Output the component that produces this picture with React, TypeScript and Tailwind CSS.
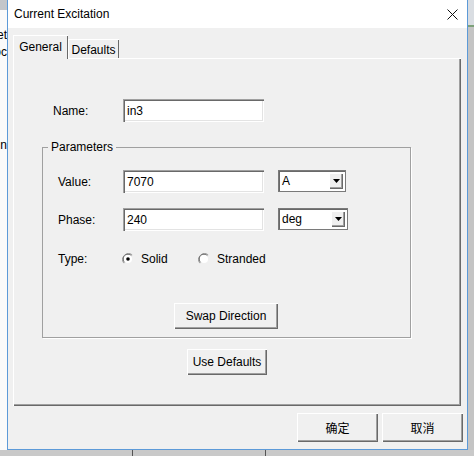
// Classic Win32 "Current Excitation" property dialog.

const btn =
  "flex items-center justify-center bg-[#f0f0f0] shadow-[inset_1px_1px_0_#ffffff,inset_-1px_-1px_0_#696969,inset_-2px_-2px_0_#a0a0a0]";
const sunken =
  "bg-white shadow-[inset_1px_1px_0_#a0a0a0,inset_2px_2px_0_#696969,inset_-1px_-1px_0_#ffffff,inset_-2px_-2px_0_#e3e3e3]";

function TextBox({ value }: { value: string }) {
  return (
    <div className={`${sunken} w-[141px] h-[23px] flex items-center pl-[4px]`}>
      {value}
    </div>
  );
}

function Combo({ value, width }: { value: string; width: string }) {
  return (
    <div
      className={`${width} h-[22px] bg-white border border-[#7a7a7a] shadow-[inset_1px_1px_0_#696969] flex items-center pl-[3px] pr-[2px]`}
    >
      <span className="flex-1">{value}</span>
      <span className={`${btn} w-[14px] h-[16px]`}>
        <svg width="7" height="4" viewBox="0 0 7 4">
          <path d="M0 0h7L3.5 4z" fill="#000" />
        </svg>
      </span>
    </div>
  );
}

function Radio({ checked, label }: { checked?: boolean; label: string }) {
  return (
    <div className="flex items-center gap-[7px]">
      <svg width="12" height="12" viewBox="0 0 12 12">
        <path d="M10.2 1.8A6 6 0 0 0 1.8 10.2" fill="none" stroke="#a0a0a0" />
        <path d="M9.4 2.6A4.8 4.8 0 0 0 2.6 9.4" fill="none" stroke="#696969" />
        <circle cx="6" cy="6" r="4" fill="#fff" />
        {checked && <circle cx="6" cy="6" r="1.8" fill="#000" />}
      </svg>
      <span>{label}</span>
    </div>
  );
}

export default function App() {
  return (
    <div className="w-[474px] h-[456px] flex flex-col overflow-hidden bg-[#c8c8c8] text-[12px] leading-none text-black font-['Liberation_Sans','Noto_Sans_CJK_SC',Arial,sans-serif]">
      <div className="flex h-[450px]">
        {/* desktop behind, left */}
        <div className="w-[7px] flex flex-col bg-[#fafafa] overflow-hidden">
          <div className="h-[10px] bg-[#c3c6ca] shrink-0" />
          <div className="flex justify-end whitespace-nowrap mt-[19px]">et</div>
          <div className="flex justify-end whitespace-nowrap mt-[5px]">oc</div>
          <div className="flex justify-end whitespace-nowrap mt-[81px]">n</div>
        </div>

        {/* dialog */}
        <div className="w-[461px] flex flex-col border-x border-b border-[#5c9ad8] bg-[#f0f0f0]">
          <div className="h-[28px] bg-white flex items-center pl-[6px] pr-[9px] shrink-0">
            <span className="flex-1">Current Excitation</span>
            <svg width="11" height="11" viewBox="0 0 11 11">
              <path d="M0.5 0.5l10 10M10.5 0.5l-10 10" stroke="#111" strokeWidth="1" />
            </svg>
          </div>

          <div className="flex flex-col pl-[5px] pt-[7px]">
            {/* tabs */}
            <div className="flex items-end h-[24px]">
              <div className="w-[55px] h-[24px] flex items-center justify-center pb-[1px] bg-[#f0f0f0] shadow-[inset_1px_1px_0_#ffffff,inset_-1px_0_0_#696969] z-10">
                General
              </div>
              <div className="w-[51px] h-[20px] flex items-center justify-center pt-[2px] shadow-[inset_1px_1px_0_#ffffff,inset_-1px_0_0_#696969]">
                Defaults
              </div>
            </div>

            {/* tab panel */}
            <div className="w-[448px] h-[348px] -mt-[1px] flex flex-col shadow-[inset_1px_1px_0_#ffffff,inset_-1px_-1px_0_#696969,inset_-2px_-2px_0_#a0a0a0]">
              <div className="flex items-center mt-[41px] ml-[40px]">
                <span className="w-[70px]">Name:</span>
                <TextBox value="in3" />
              </div>

              <div className="relative ml-[29px] mt-[25px] w-[369px] h-[191px] border border-[#a0a0a0] shadow-[1px_1px_0_#ffffff] flex flex-col">
                <span className="absolute -top-[7px] left-[5px] px-[3px] bg-[#f0f0f0]">Parameters</span>

                <div className="flex items-start mt-[22px] ml-[15px]">
                  <span className="w-[65px] h-[23px] flex items-center">Value:</span>
                  <TextBox value="7070" />
                  <div className="ml-[14px]">
                    <Combo value="A" width="w-[68px]" />
                  </div>
                </div>

                <div className="flex items-start mt-[15px] ml-[15px]">
                  <span className="w-[65px] h-[23px] flex items-center">Phase:</span>
                  <TextBox value="240" />
                  <div className="ml-[14px]">
                    <Combo value="deg" width="w-[70px]" />
                  </div>
                </div>

                <div className="flex items-center mt-[20px] ml-[15px] h-[16px]">
                  <span className="w-[64px]">Type:</span>
                  <div className="w-[76px]">
                    <Radio checked label="Solid" />
                  </div>
                  <Radio label="Stranded" />
                </div>

                <div className="ml-[131px] mt-[36px]">
                  <div className={`${btn} w-[104px] h-[26px]`}>Swap Direction</div>
                </div>
              </div>

              <div className="ml-[174px] mt-[11px]">
                <div className={`${btn} w-[80px] h-[26px]`}>Use Defaults</div>
              </div>
            </div>

            {/* footer buttons */}
            <div className="flex justify-end gap-[4px] pr-[4px] mt-[7px]">
              <div className={`${btn} w-[81px] h-[29px] font-['Noto_Sans_CJK_SC',sans-serif]`}>确定</div>
              <div className={`${btn} w-[81px] h-[29px] font-['Noto_Sans_CJK_SC',sans-serif]`}>取消</div>
            </div>
          </div>
        </div>

        {/* desktop behind, right */}
        <div className="flex-1 flex flex-col bg-[#c4c4c4]">
          <div className="h-[25px] bg-[#d9dde2]" />
          <div className="h-[2px] bg-[#7da17a]" />
        </div>
      </div>

      {/* desktop behind, bottom */}
      <div className="flex-1 flex bg-[#c9c9c9]">
        <div className="w-[133px] border-r border-[#555]" />
        <div className="w-[133px] border-r border-[#555]" />
      </div>
    </div>
  );
}
